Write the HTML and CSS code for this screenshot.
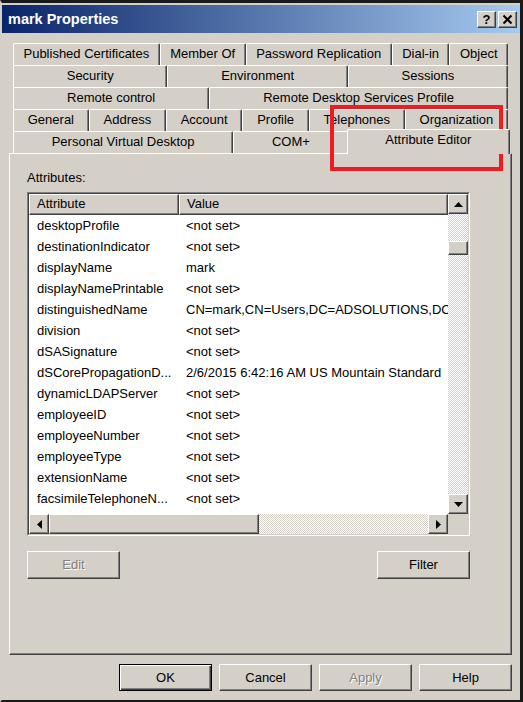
FILE: index.html
```html
<!DOCTYPE html>
<html>
<head>
<meta charset="utf-8">
<title>mark Properties</title>
<link rel="stylesheet" href="styles.css">
</head>
<body>
<div class="window">
  <div class="titlebar">
    <span class="title">mark Properties</span>
    <div class="caption-btns">
      <div class="cap-btn">?</div>
      <div class="cap-btn"><svg width="19" height="17" viewBox="0 0 19 17"><path d="M5.5 4.5 L13.5 12.5 M13.5 4.5 L5.5 12.5" stroke="#000" stroke-width="2" fill="none"/></svg></div>
    </div>
  </div>
  <div class="content">
    <div class="tabs">
      <div class="tab-row">
        <div class="tab">Published Certificates</div>
        <div class="tab">Member Of</div>
        <div class="tab">Password Replication</div>
        <div class="tab">Dial-in</div>
        <div class="tab">Object</div>
      </div>
      <div class="tab-row">
        <div class="tab">Security</div>
        <div class="tab">Environment</div>
        <div class="tab">Sessions</div>
      </div>
      <div class="tab-row">
        <div class="tab">Remote control</div>
        <div class="tab">Remote Desktop Services Profile</div>
      </div>
      <div class="tab-row">
        <div class="tab">General</div>
        <div class="tab">Address</div>
        <div class="tab">Account</div>
        <div class="tab">Profile</div>
        <div class="tab">Telephones</div>
        <div class="tab">Organization</div>
      </div>
      <div class="tab-row">
        <div class="tab">Personal Virtual Desktop</div>
        <div class="tab">COM+</div>
        <div class="tab selected">Attribute Editor</div>
      </div>
    </div>
    <div class="panel">
      <div class="label">Attributes:</div>
      <div class="listbox">
        <div class="listbox-inner">
          <div class="list-view">
            <div class="list-header">
              <div class="hcell">Attribute</div>
              <div class="hcell">Value</div>
            </div>
            <div class="list-row"><span class="c1">desktopProfile</span><span class="c2">&lt;not set&gt;</span></div>
            <div class="list-row"><span class="c1">destinationIndicator</span><span class="c2">&lt;not set&gt;</span></div>
            <div class="list-row"><span class="c1">displayName</span><span class="c2">mark</span></div>
            <div class="list-row"><span class="c1">displayNamePrintable</span><span class="c2">&lt;not set&gt;</span></div>
            <div class="list-row"><span class="c1">distinguishedName</span><span class="c2">CN=mark,CN=Users,DC=ADSOLUTIONS,DC=COM</span></div>
            <div class="list-row"><span class="c1">division</span><span class="c2">&lt;not set&gt;</span></div>
            <div class="list-row"><span class="c1">dSASignature</span><span class="c2">&lt;not set&gt;</span></div>
            <div class="list-row"><span class="c1">dSCorePropagationD...</span><span class="c2">2/6/2015 6:42:16 AM US Mountain Standard</span></div>
            <div class="list-row"><span class="c1">dynamicLDAPServer</span><span class="c2">&lt;not set&gt;</span></div>
            <div class="list-row"><span class="c1">employeeID</span><span class="c2">&lt;not set&gt;</span></div>
            <div class="list-row"><span class="c1">employeeNumber</span><span class="c2">&lt;not set&gt;</span></div>
            <div class="list-row"><span class="c1">employeeType</span><span class="c2">&lt;not set&gt;</span></div>
            <div class="list-row"><span class="c1">extensionName</span><span class="c2">&lt;not set&gt;</span></div>
            <div class="list-row"><span class="c1">facsimileTelephoneN...</span><span class="c2">&lt;not set&gt;</span></div>
            <div class="list-row"><span class="c1">flags</span><span class="c2">&lt;not set&gt;</span></div>
          </div>
          <div class="vscroll">
            <div class="sb-btn"><svg width="9" height="5" viewBox="0 0 9 5"><polygon points="0,5 4.5,0 9,5" fill="#000"/></svg></div>
            <div class="sb-thumb vthumb"></div>
            <div class="sb-btn sb-end"><svg width="9" height="5" viewBox="0 0 9 5"><polygon points="0,0 9,0 4.5,5" fill="#000"/></svg></div>
          </div>
          <div class="hscroll">
            <div class="sb-btn"><svg width="5" height="9" viewBox="0 0 5 9"><polygon points="5,0 5,9 0,4.5" fill="#000"/></svg></div>
            <div class="sb-thumb hthumb"></div>
            <div class="sb-btn sb-end-h"><svg width="5" height="9" viewBox="0 0 5 9"><polygon points="0,0 5,4.5 0,9" fill="#000"/></svg></div>
          </div>
          <div class="corner"></div>
        </div>
      </div>
      <div class="panel-buttons">
        <div class="btn disabled">Edit</div>
        <div class="btn">Filter</div>
      </div>
    </div>
    <div class="footer">
      <div class="btn default">OK</div>
      <div class="btn">Cancel</div>
      <div class="btn disabled">Apply</div>
      <div class="btn">Help</div>
    </div>
  </div>
</div>
<div class="annotation"></div>
</body>
</html>
```

FILE: styles.css
```css
* { box-sizing: border-box; }

html, body {
  margin: 0;
  padding: 0;
}

body {
  width: 523px;
  height: 702px;
  position: relative;
  overflow: hidden;
  background: #1a1a1a;
  font-family: "Liberation Sans", Arial, sans-serif;
  font-size: 13px;
  color: #000;
}

.window {
  width: 523px;
  height: 702px;
  background: #d4d0c8;
  border-top: 3px solid #1a1a1a;
  border-right: 3px solid #1a1a1a;
  border-bottom: 2px solid #1a1a1a;
  border-left: 2px solid #d4d0c8;
  padding-top: 2px;
  display: flex;
  flex-direction: column;
}

.titlebar {
  height: 28px;
  flex: none;
  background: linear-gradient(to right, #0a246a, #a6caf0);
  display: flex;
  align-items: center;
  justify-content: space-between;
  padding: 0 3px 0 6px;
}

.title {
  color: #fff;
  font-weight: bold;
  font-size: 14.5px;
}

.caption-btns {
  display: flex;
  gap: 2px;
}

.cap-btn {
  width: 19px;
  height: 17px;
  background: #d4d0c8;
  border: 1px solid;
  border-color: #fff #404040 #404040 #fff;
  box-shadow: inset -1px -1px #808080;
  display: flex;
  align-items: center;
  justify-content: center;
  font-weight: bold;
  font-size: 13px;
  line-height: 1;
}

.cap-btn svg { display: block; margin: -1px; }

.content {
  flex: 1;
  display: flex;
  flex-direction: column;
  padding: 10px 8px 9px 7px;
}

.tabs {
  margin: 0 4px;
}

.tab-row {
  display: flex;
  height: 22px;
  align-items: flex-start;
}

.tab {
  flex: 1 1 auto;
  height: 22px;
  line-height: 20px;
  padding: 0 6px;
  text-align: center;
  white-space: nowrap;
  background: #d4d0c8;
  border-top: 1px solid #fff;
  border-left: 1px solid #fff;
  border-right: 1px solid #404040;
  box-shadow: inset -1px 0 #808080;
  border-radius: 2px 2px 0 0;
}

.tab.selected {
  height: 25px;
  margin: -2px -2px -1px;
  z-index: 1;
}

.panel {
  flex: 1;
  border: 1px solid;
  border-color: #fff #404040 #404040 #fff;
  box-shadow: inset -1px -1px #808080;
  padding: 16px 0 0 17px;
}

.label {
  line-height: 16px;
  margin-bottom: 6px;
}

.listbox {
  width: 443px;
  height: 344px;
  border: 1px solid;
  border-color: #808080 #fff #fff #808080;
}

.listbox-inner {
  height: 100%;
  border: 1px solid;
  border-color: #404040 #d4d0c8 #d4d0c8 #404040;
  background: #fff;
  display: grid;
  grid-template-columns: 1fr 20px;
  grid-template-rows: 1fr 20px;
}

.list-view {
  overflow: hidden;
  min-width: 0;
}

.list-header {
  display: grid;
  grid-template-columns: 150px 1fr;
  height: 21px;
  background: #d4d0c8;
}

.hcell {
  border: 1px solid;
  border-color: #fff #404040 #404040 #fff;
  box-shadow: inset -1px -1px #808080;
  padding-left: 7px;
  line-height: 18px;
  white-space: nowrap;
  overflow: hidden;
}

.list-row {
  display: grid;
  grid-template-columns: 150px 1fr;
  height: 21px;
  line-height: 22px;
  white-space: nowrap;
}

.list-row span {
  overflow: hidden;
}

.c1 { padding-left: 8px; }
.c2 { padding-left: 7px; }

.vscroll,
.hscroll {
  background-color: #fff;
  background-image: conic-gradient(#d4d0c8 25%, #fff 0 50%, #d4d0c8 0 75%, #fff 0);
  background-size: 2px 2px;
}

.vscroll {
  display: flex;
  flex-direction: column;
}

.hscroll {
  display: flex;
}

.sb-btn,
.sb-thumb {
  flex: none;
  background: #d4d0c8;
  border: 1px solid;
  border-color: #fff #404040 #404040 #fff;
  box-shadow: inset -1px -1px #808080;
}

.sb-btn {
  width: 20px;
  height: 20px;
  display: flex;
  align-items: center;
  justify-content: center;
}

.sb-btn svg { display: block; }

.sb-end { margin-top: auto; }
.sb-end-h { margin-left: auto; }

.vthumb {
  height: 14px;
  margin-top: 27px;
}

.hthumb {
  width: 210px;
}

.corner {
  background: #d4d0c8;
}

.panel-buttons {
  width: 443px;
  display: flex;
  justify-content: space-between;
  margin-top: 15px;
}

.btn {
  width: 93px;
  height: 28px;
  background: #d4d0c8;
  border: 1px solid;
  border-color: #fff #404040 #404040 #fff;
  box-shadow: inset -1px -1px #808080;
  display: flex;
  align-items: center;
  justify-content: center;
  padding-bottom: 1px;
}

.btn.disabled {
  color: #808080;
  text-shadow: 1px 1px #fff;
}

.btn.default {
  border-color: #000;
  box-shadow: inset 1px 1px #fff, inset -1px -1px #404040, inset -2px -2px #808080;
}

.footer {
  display: flex;
  justify-content: flex-end;
  gap: 7px;
  margin-top: 9px;
}

.footer .btn {
  height: 27px;
}

.annotation {
  position: absolute;
  left: 330px;
  top: 105px;
  width: 173px;
  height: 66px;
  border: 4px solid #ec1c24;
}
```
